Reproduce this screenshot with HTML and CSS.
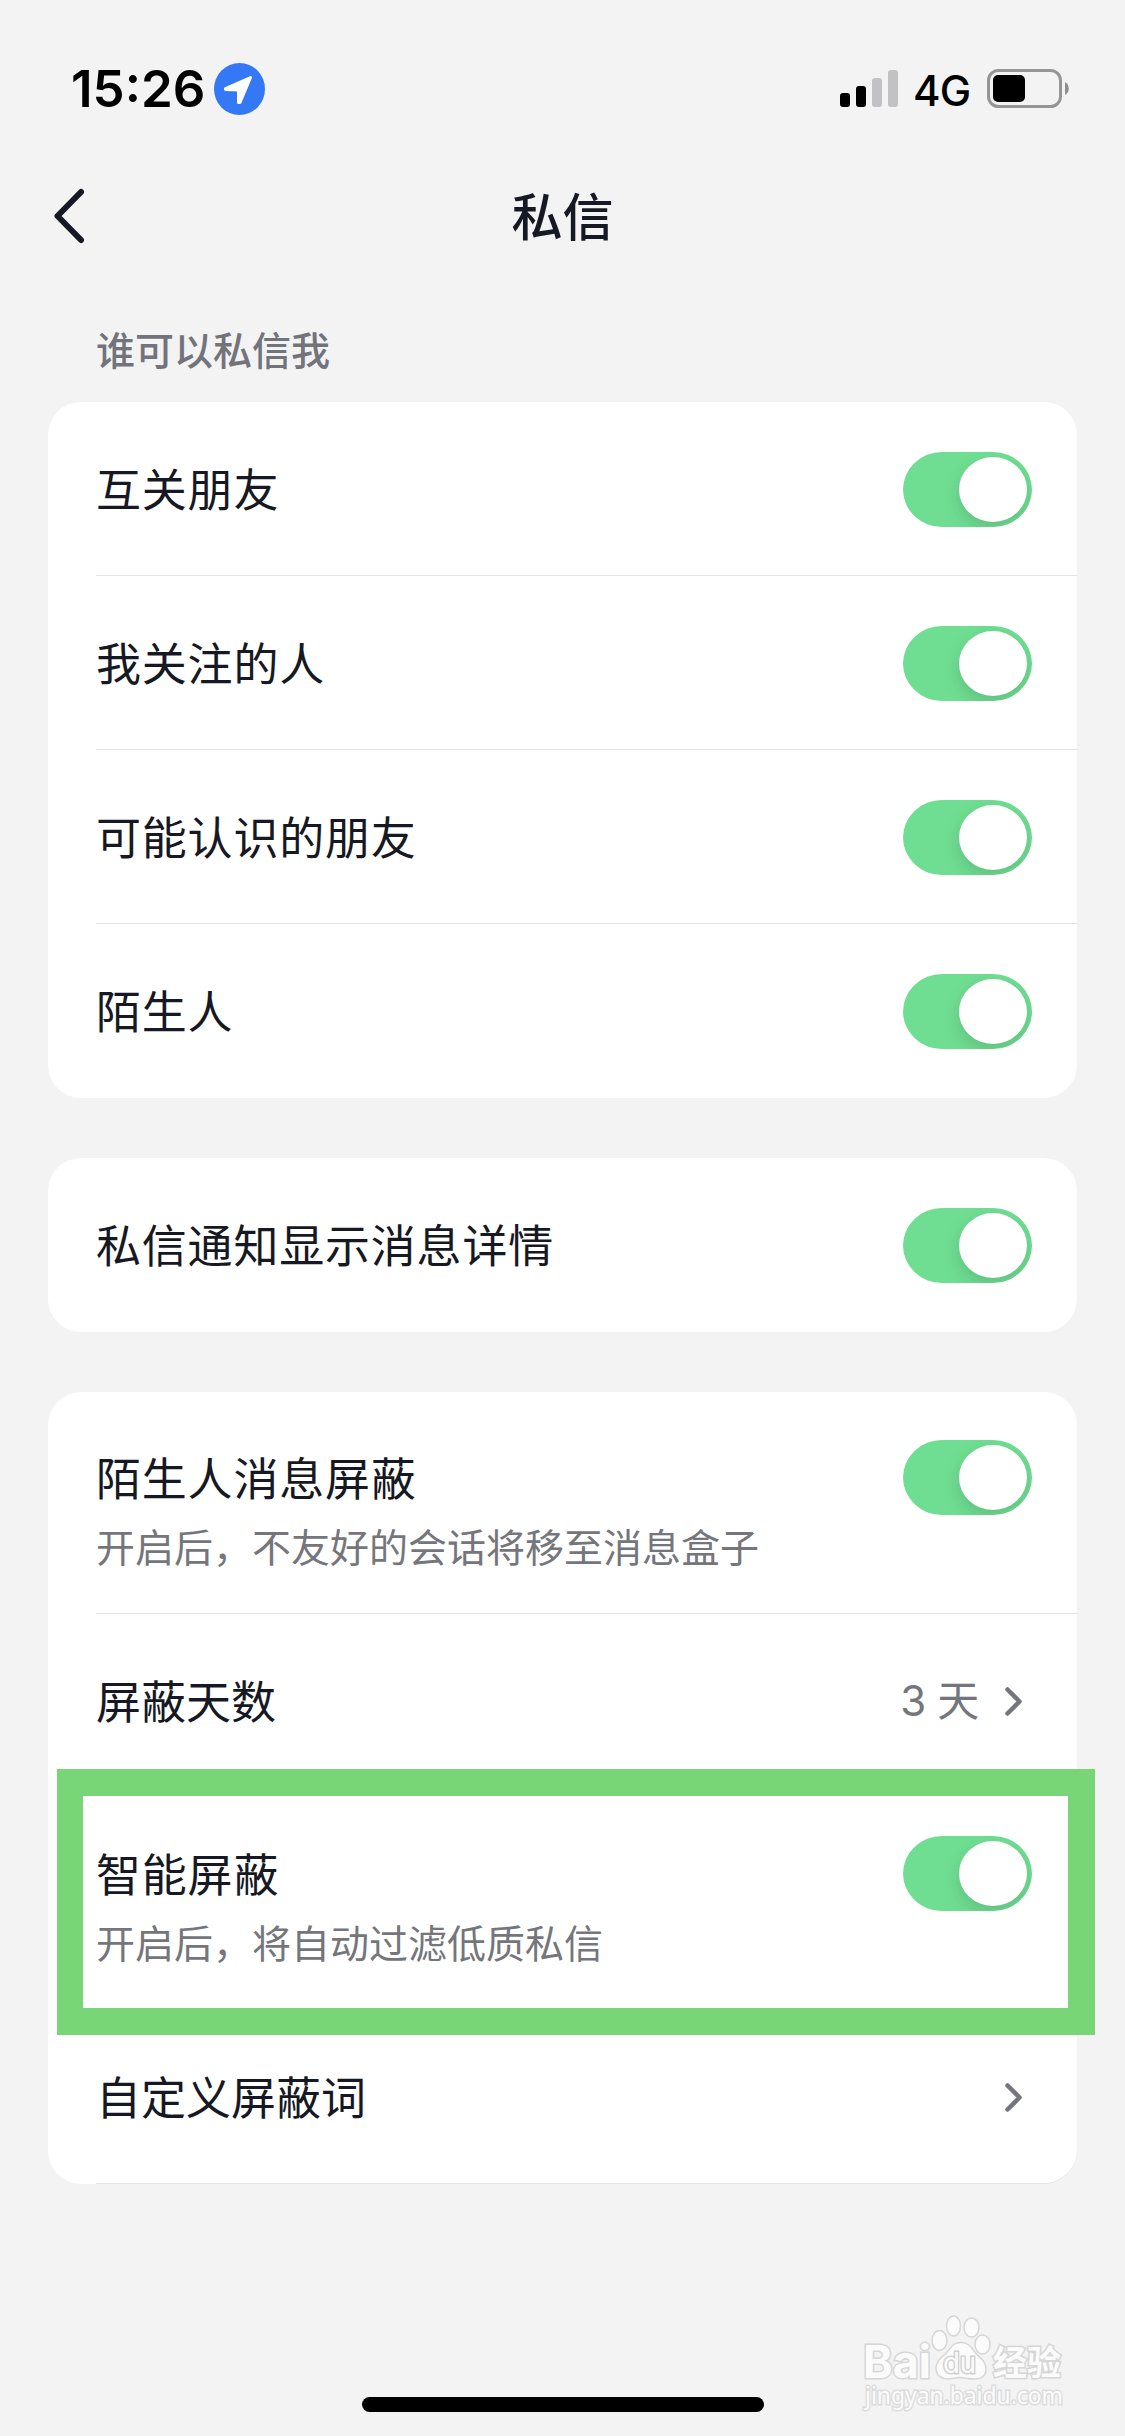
FILE: index.html
```html
<!DOCTYPE html>
<html lang="zh-CN">
<head>
<meta charset="UTF-8">
<meta name="viewport" content="width=device-width, initial-scale=1.0">
<title>私信</title>
<link rel="stylesheet" href="styles.css">
</head>
<body>
    <div class="status-bar">
        <div class="status-left">
            <span class="time">15:26</span>
            <svg class="location" viewBox="0 0 51 52">
                <ellipse cx="25.5" cy="26" rx="25.5" ry="26" fill="#3478f6"/>
                <path d="M11.5 25.5 L36.5 14.5 L26 39.5 L24.5 39.5 L24.5 27 L11.5 26.5 Z" fill="#fff" stroke="#fff" stroke-width="3" stroke-linejoin="round"/>
            </svg>
        </div>
        <div class="status-right">
            <svg class="signal" viewBox="0 0 58 37">
                <rect x="0" y="23" width="10" height="14" rx="3"/>
                <rect x="16" y="16" width="10" height="21" rx="3"/>
                <rect x="32" y="8" width="10" height="29" rx="3" fill="#c2c2c4"/>
                <rect x="48" y="0" width="10" height="37" rx="3" fill="#c2c2c4"/>
            </svg>
            <span class="network">4G</span>
            <svg class="battery" viewBox="0 0 82 39">
                <rect x="1.5" y="1.5" width="72" height="36" rx="10" fill="none" stroke="#959595" stroke-width="3"/>
                <rect x="6" y="6" width="32" height="27" rx="5"/>
                <path d="M78 13 C83 15.5 83 23.5 78 26 Z" fill="#8e8e8e"/>
            </svg>
        </div>
    </div>

    <div class="nav">
        <svg class="back" viewBox="0 0 32 56">
            <path d="M28 4 L4.5 28 L28 52" fill="none" stroke="#161823" stroke-width="6" stroke-linecap="round" stroke-linejoin="round"/>
        </svg>
        <h1>私信</h1>
    </div>

    <div class="section-title">谁可以私信我</div>
    <div class="card">
        <div class="row">
            <span class="label">互关朋友</span>
            <span class="switch"></span>
        </div>
        <div class="row">
            <span class="label">我关注的人</span>
            <span class="switch"></span>
        </div>
        <div class="row">
            <span class="label">可能认识的朋友</span>
            <span class="switch"></span>
        </div>
        <div class="row last">
            <span class="label">陌生人</span>
            <span class="switch"></span>
        </div>
    </div>

    <div class="card">
        <div class="row last">
            <span class="label">私信通知显示消息详情</span>
            <span class="switch"></span>
        </div>
    </div>

    <div class="card">
        <div class="row tall">
            <div class="text">
                <span class="label">陌生人消息屏蔽</span>
                <span class="desc">开启后，不友好的会话将移至消息盒子</span>
            </div>
            <span class="switch"></span>
        </div>
        <div class="row link">
            <span class="label">屏蔽天数</span>
            <span class="value">
                <span class="days">3 天</span>
                <svg class="arrow" viewBox="0 0 17 29">
                    <path d="M2.5 2.5 L14.5 14.5 L2.5 26.5"/>
                </svg>
            </span>
        </div>
        <div class="row tall">
            <div class="text">
                <span class="label">智能屏蔽</span>
                <span class="desc">开启后，将自动过滤低质私信</span>
            </div>
            <span class="switch"></span>
            <div class="highlight"></div>
        </div>
        <div class="row link bottom">
            <span class="label">自定义屏蔽词</span>
            <span class="value">
                <svg class="arrow" viewBox="0 0 17 29">
                    <path d="M2.5 2.5 L14.5 14.5 L2.5 26.5"/>
                </svg>
            </span>
        </div>
    </div>

    <div class="home-bar"></div>

    <!-- watermark -->
    <svg class="watermark" viewBox="0 0 220 115">
        <g class="mark">
            <text class="bai" x="8" y="73" textLength="68" lengthAdjust="spacingAndGlyphs">Bai</text>
            <ellipse cx="84.5" cy="35.5" rx="7.5" ry="10"/>
            <ellipse cx="98.5" cy="21" rx="7" ry="10"/>
            <ellipse cx="116.5" cy="22.5" rx="7.5" ry="9.5"/>
            <ellipse cx="127.5" cy="39.5" rx="7.5" ry="9.5"/>
            <path d="M106 37.5 C113 37.5 116 42 119 46 C123 52 131 55 131 64 C131 71 126 74 119 74 C113 74 110 72.5 105.5 72.5 C100 72.5 98 74 93 74 C86 74 81 70 81 63 C81 55 88 52 93 46 C97 41 99 37.5 106 37.5 Z"/>
            <text class="du" x="88" y="68" textLength="33" lengthAdjust="spacingAndGlyphs">du</text>
            <text class="jy" x="138" y="70" textLength="68" lengthAdjust="spacingAndGlyphs">经验</text>
            <text class="url" x="10" y="99" textLength="198" lengthAdjust="spacingAndGlyphs">jingyan.baidu.com</text>
        </g>
    </svg>
</body>
</html>
```

FILE: styles.css
```css
* {
    box-sizing: border-box;
}
body {
    margin: 0;
    height: 2436px;
    position: relative;
    overflow: hidden;
    background-color: #f3f3f4;
    color: #161823;
    font-family: Inter, "Noto Sans CJK SC", sans-serif;
}
svg {
    display: block;
    flex: none;
}
.status-bar {
    height: 132px;
    padding: 63px 56px 0 71px;
    display: flex;
    justify-content: space-between;
    align-items: flex-start;
    color: #000;
}
.status-left,
.status-right {
    display: flex;
}
.time {
    width: 143px;
    font-size: 51px;
    line-height: 52px;
    font-weight: 600;
}
.location {
    width: 51px;
    height: 52px;
}
.status-right {
    padding-top: 6px;
}
.signal {
    width: 58px;
    height: 37px;
    margin-top: 1px;
}
.network {
    width: 74px;
    margin-left: 15px;
    font-size: 42px;
    line-height: 43px;
    font-weight: 500;
    letter-spacing: -0.8px;
}
.battery {
    width: 82px;
    height: 39px;
}
.nav {
    height: 168px;
    position: relative;
}
.back {
    position: absolute;
    left: 53px;
    top: 56px;
    width: 32px;
    height: 56px;
}
h1 {
    margin: 0;
    padding-top: 2px;
    text-align: center;
    font-size: 51px;
    line-height: 168px;
    font-weight: 500;
}
.section-title {
    height: 102px;
    padding: 22px 96px 0;
    font-size: 39px;
    line-height: 58px;
    font-weight: 500;
    color: #73747b;
}
.card {
    margin: 0 48px 60px;
    background-color: #fff;
    border-radius: 33px;
}
.row {
    position: relative;
    height: 174px;
    margin-left: 48px;
    padding-right: 45px;
    display: flex;
    align-items: center;
    justify-content: space-between;
    box-shadow: inset 0 -1px 0 #e3e3e4;
}
.row.last {
    box-shadow: none;
}
.row.bottom {
    border-bottom-right-radius: 33px;
}
.row.tall {
    height: 222px;
    padding-top: 48px;
    align-items: flex-start;
}
.text {
    display: flex;
    flex-direction: column;
}
.label {
    padding-top: 3px;
    font-size: 45px;
    line-height: 75px;
    letter-spacing: 0.8px;
}
.link .label {
    letter-spacing: 0;
}
.text .label {
    padding-top: 2px;
}
.desc {
    font-size: 39px;
    line-height: 60px;
    margin-top: 1px;
    color: #75767c;
}
.switch {
    width: 129px;
    height: 75px;
    padding: 5px;
    display: flex;
    justify-content: flex-end;
    overflow: hidden;
    background-color: #6fde92;
    border-radius: 39px / 37.5px;
}
.switch::after {
    content: "";
    width: 68px;
    height: 65px;
    background-color: #fff;
    border-radius: 50%;
    box-shadow: 0 7px 18px rgba(0, 0, 0, 0.14);
}
.value {
    display: flex;
    align-items: center;
    gap: 26px;
    padding-right: 10px;
    color: #75767c;
}
.days {
    font-size: 42px;
    line-height: 60px;
    letter-spacing: -0.3px;
}
.arrow {
    width: 17px;
    height: 29px;
}
.arrow path {
    fill: none;
    stroke: #75767c;
    stroke-width: 4.5;
    stroke-linecap: round;
    stroke-linejoin: round;
}
.highlight {
    position: absolute;
    left: -39px;
    top: -19px;
    width: 1038px;
    height: 266px;
    border: 27px solid #79d677;
    border-left-width: 26px;
}
.home-bar {
    position: absolute;
    left: 362px;
    top: 2397px;
    width: 402px;
    height: 15px;
    background-color: #000;
    border-radius: 8px;
}
.watermark {
    position: absolute;
    left: 855px;
    top: 2305px;
    width: 220px;
    height: 115px;
}
.mark {
    fill: #fbfbfb;
    stroke: #d6d6d6;
    stroke-width: 1.5;
}
.mark text {
    paint-order: stroke;
    stroke-width: 3;
}
.bai {
    font: bold 45px Inter, sans-serif;
}
.mark .du {
    font: 28px Inter, sans-serif;
    stroke: #d0d0d0;
}
.jy {
    font: bold 34px "Noto Sans CJK SC", sans-serif;
}
.mark .url {
    font: 24px "Noto Sans", sans-serif;
    stroke: #dcdcdc;
}
```
